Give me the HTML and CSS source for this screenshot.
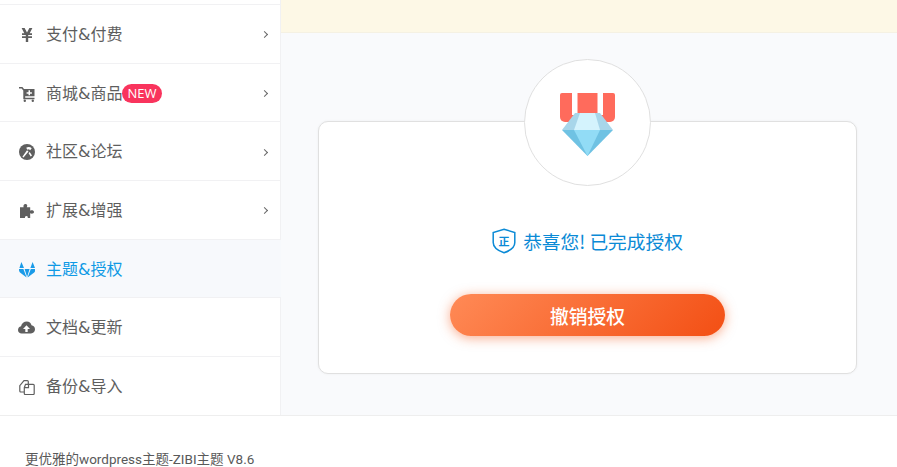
FILE: index.html
```html
<!DOCTYPE html>
<html lang="zh-CN">
<head>
<meta charset="utf-8">
<title>主题&amp;授权</title>
<link rel="stylesheet" href="styles.css">
</head>
<body>
<div class="layout">
  <nav class="sidebar">
    <a class="item"><svg class="ico" viewBox="0 0 16 16"><path d="M2.600 1h3l2.400 4.600L10.400 1h3l-2.700 5.200H13V8H9.200v1.300H13v1.800H9.200V15H6.800v-3.900H3V9.300h3.800V8H3V6.200h2.300z"/></svg><span>支付&amp;付费</span><i class="chev"></i></a>
    <a class="item"><svg class="ico" viewBox="0 0 16 16"><path d="M0 1h3.400L5 3h10.500v7.200H6.200v1.600h9.300v1.400H4.300V4.500L2.600 2.500H0zM9.500 4.300v1.900H7.600v1.500h1.900v1.500H11V7.700h1.900V6.200H11V4.300z" fill-rule="evenodd"/><circle cx="5.800" cy="14.800" r="1.200"/><circle cx="13.800" cy="14.800" r="1.200"/></svg><span>商城&amp;商品</span><b class="badge">NEW</b><i class="chev"></i></a>
    <a class="item"><svg class="ico" viewBox="0 0 16 16"><circle cx="8" cy="8" r="8"/><path d="M3.400 12.800 8 6.300l1.500 1.200-5 6zM7.200 3.700c1.900-1.200 4-1 5.500.5l-1.500 2-1.300-1-1.500.6zM9.600 9.200l1.100-1.300 2.300 3.500-1.300 1z" fill="#fff"/></svg><span>社区&amp;论坛</span><i class="chev"></i></a>
    <a class="item"><svg class="ico" viewBox="0 0 16 16"><path d="M5.500 1.200c1.500-.8 3 .3 2.700 1.700l-.4 1.300h3.400v3.500c1.600-.8 3.800-.3 3.800 1.300s-2.200 2.100-3.800 1.300V15H8.700c.4-1.100-.1-2-1.300-2s-1.800 1-1.300 2H1V4.200h3.600l-.2-1.300c0-.7.500-1.300 1.100-1.700z"/></svg><span>扩展&amp;增强</span><i class="chev"></i></a>
    <a class="item active"><svg class="ico" viewBox="0 0 16 16"><path d="M2.400 0 5 6H.4zM13.600 0 16 6h-4.600zM0 7h4.400l3.200 8.500L1 10.500C.2 9.800-.2 8.200 0 7zM16.200 7h-4.400L8.600 15.500l6.600-5c.8-.7 1.200-2.300 1-3.500zM5.600 7h5L8.100 15z"/></svg><span>主题&amp;授权</span></a>
    <a class="item"><svg class="ico cloud" viewBox="0 0 17 16"><path d="M8.800 1.500c2.500 0 4.300 1.600 4.700 3.800 2 .3 3.500 1.900 3.500 4 0 2.300-1.800 4.200-4 4.200H3.600C1.600 13.500 0 11.900 0 9.900c0-1.800 1.200-3.300 3-3.700.7-2.700 3-4.700 5.800-4.700zM8.500 5.300 5 9h2.300v3h2.400V9H12z" fill-rule="evenodd"/></svg><span>文档&amp;更新</span></a>
    <a class="item"><svg class="ico" viewBox="0 0 16 16"><path class="outline" d="M5.300 13H1.800a1 1 0 0 1-1-1V6.600l4.200-5h3.300a1 1 0 0 1 1 1v2.700M6.500 5.300h7.700a1 1 0 0 1 1 1v8.200a1 1 0 0 1-1 1H6.300a1 1 0 0 1-1-1V8.700zM9.500 5.300v3.400H5.300"/></svg><span>备份&amp;导入</span></a>
  </nav>
  <main class="content">
    <div class="notice"></div>
    <div class="panel">
      <section class="card">
        <div class="medal">
          <svg viewBox="0 0 55 64" width="55" height="64">
            <path d="M2 0h51a2 2 0 0 1 2 2v22a5 5 0 0 1-5 5H5a5 5 0 0 1-5-5V2a2 2 0 0 1 2-2z" fill="#ff6b5c"/>
            <rect x="12" width="5.500" height="22" fill="#fff"/>
            <rect x="37.500" width="5.500" height="22" fill="#fff"/>
            <path d="M15 20h25l13 17H2z" fill="#a8d6ea"/>
            <path d="M20 20h15l5 17H14z" fill="#d4f3fd"/>
            <path d="M2 37h51L27.500 63z" fill="#6fc2e3"/>
            <path d="M14 37h26L27.500 63z" fill="#92dcf6"/>
          </svg>
        </div>
        <p class="status">
          <svg class="shield" viewBox="0 0 24 26"><path d="M12 1.200 22.800 4.500v10c0 4.800-5 8.300-10.800 10.300C6.200 22.800 1.200 19.300 1.200 14.500v-10z" fill="none" stroke="#0b8ad6" stroke-width="1.500"/><text x="12" y="17.500" text-anchor="middle" class="shield-text">正</text></svg>
          <span>恭喜您! 已完成授权</span>
        </p>
        <button class="revoke" type="button">撤销授权</button>
      </section>
    </div>
  </main>
</div>
<footer class="foot">更优雅的wordpress主题-ZIBI主题 V8.6</footer>
</body>
</html>
```
FILE: styles.css
```css
* { box-sizing: border-box; }
html, body { margin: 0; height: 467px; overflow: hidden; }
body {
  background: #fff;
  font-family: "Noto Sans CJK SC", "Open Sans", "Liberation Sans", sans-serif;
  color: #595959;
}
.layout { display: flex; height: 416px; border-bottom: 1px solid #eeeeee; }
.sidebar {
  width: 281px;
  flex: none;
  padding-top: 4px;
  display: grid;
  grid-auto-rows: 58.7px;
  background: #fff;
  border-right: 1px solid #f1f1f3;
}
.item {
  display: flex;
  align-items: center;
  padding: 2px 13px 0 19px;
  border-top: 1px solid #f1f1f3;
  font-family: "DejaVu Sans", "Noto Sans CJK SC", sans-serif;
  font-size: 16px;
  line-height: 20px;
  color: #5e5e5e;
}
.item.active {
  color: #0f9ae5;
  background: #f7f9fc;
  margin-right: -1px;
}
.ico { width: 16px; height: 16px; flex: none; margin-right: 11px; fill: #5f5f5f; }
.cloud { width: 17px; margin-left: -1px; }
.active .ico { fill: #1a9be8; }
.outline { fill: none; stroke: #5f5f5f; stroke-width: 1.200; }
.badge {
  background: #f9345d;
  color: #fff;
  font: 400 13px/19px "Open Sans", "Liberation Sans", sans-serif;
  padding: 0 5px;
  border-radius: 10px;
}
.chev {
  margin-left: auto;
  width: 5px;
  height: 5px;
  border-top: 1.500px solid #666;
  border-right: 1.500px solid #666;
  transform: rotate(45deg);
}
.content { flex: 1; display: flex; flex-direction: column; background: #f9fafc; }
.notice { height: 33px; flex: none; background: #fdf8e6; border-bottom: 1px solid #f5f1e3; }
.panel { flex: 1; padding: 88px 40px 41px 37px; }
.card {
  position: relative;
  height: 253px;
  background: #fff;
  border: 1px solid #e0e0e0;
  border-radius: 10px;
  box-shadow: 0 0 3px rgba(0, 0, 0, .05);
  display: flex;
  flex-direction: column;
  align-items: center;
  padding-top: 105px;
}
.medal {
  position: absolute;
  top: -63px;
  left: 50%;
  margin-left: -63.500px;
  width: 127px;
  height: 127px;
  border-radius: 50%;
  background: #fff;
  border: 1px solid #e0e0e0;
  display: flex;
  align-items: center;
  justify-content: center;
  overflow: hidden;
}
.medal svg { margin-top: 5px; }
.status {
  display: flex;
  align-items: center;
  gap: 7px;
  margin: 0;
  font-size: 18.700px;
  line-height: 28px;
  color: #0b8ad6;
}
.shield { width: 24px; height: 26px; flex: none; }
.shield-text { font-size: 11px; font-weight: 700; fill: #0b8ad6; }
.revoke {
  margin-top: 39px;
  width: 275px;
  height: 42px;
  border: 0;
  border-radius: 21px;
  background: linear-gradient(135deg, #ff8a56, #f34f14);
  box-shadow: 0 2px 12px rgba(243, 90, 30, .5);
  color: #fff;
  font: 500 18.750px/42px "Noto Sans CJK SC", sans-serif;
}
.foot {
  padding: 35px 0 0 25px;
  font-family: Roboto, "Noto Sans CJK SC", sans-serif;
  font-size: 13.500px;
  line-height: 16px;
  color: #595959;
}
```
